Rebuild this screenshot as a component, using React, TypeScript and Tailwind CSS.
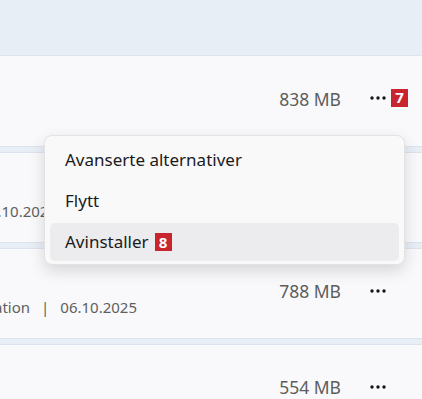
import React from 'react';

interface AppRow {
  id: string;
  publisher: string;
  date: string;
  size: string;
  anchor: number;
  badge?: string;
}

const rows: AppRow[] = [
  { id: 'a', publisher: '', date: '', size: '838 MB', anchor: 0, badge: '7' },
  { id: 'b', publisher: 'Microsoft Corporation', date: '12.10.2025', size: '812 MB', anchor: 57 },
  { id: 'c', publisher: 'Microsoft Corporation', date: '06.10.2025', size: '788 MB', anchor: 137 },
  { id: 'd', publisher: 'Microsoft Corporation', date: '01.10.2025', size: '554 MB', anchor: 36 },
];

const anchorClass: Record<number, string> = {
  0: 'w-0',
  57: 'w-[57px]',
  137: 'w-[137px]',
  36: 'w-[36px]',
};

function Dots() {
  return (
    <svg width="16" height="4" viewBox="0 0 16 4" className="block">
      <circle cx="2" cy="2" r="1.7" fill="#151515" />
      <circle cx="8" cy="2" r="1.7" fill="#151515" />
      <circle cx="14" cy="2" r="1.7" fill="#151515" />
    </svg>
  );
}

function Badge({ n }: { n: string }) {
  return (
    <span className="inline-flex items-center justify-center w-[17px] h-[18px] bg-[#c9252f] text-white text-[15px] font-bold leading-none">
      {n}
    </span>
  );
}

export default function App() {
  return (
    <div
      className="relative w-[422px] h-[399px] overflow-hidden bg-[#e8eef6]"
      style={{ fontFamily: '"Noto Sans", "Open Sans", sans-serif' }}
    >
      <div className="h-[56px] border-b border-[#dfe3ea]" />

      <div className="flex flex-col gap-[5px]">
        {rows.map((row) => (
          <div
            key={row.id}
            className="flex items-center h-[91px] bg-[#f9f9fb] border-y border-[#dde3ec] first:border-t-0"
          >
            <div className={`${anchorClass[row.anchor]} shrink-0 flex justify-end`}>
              <div className="flex flex-col whitespace-nowrap text-[15px] text-[#5f5f5f] leading-[20px]">
                <span className="invisible">App</span>
                {row.date && (
                  <span className="mt-[7px] flex">
                    <span>{row.publisher}</span>
                    <span className="px-[11px]">|</span>
                    <span>{row.date}</span>
                  </span>
                )}
              </div>
            </div>
            <div className="flex-1" />
            <span className="text-[17.5px] text-[#5d5d5d] -mt-[4px]">{row.size}</span>
            <div className="relative ml-[29px] mr-[36px] -mt-[6px]">
              <Dots />
              {row.badge && (
                <div className="absolute left-[21px] -top-[11px]">
                  <Badge n={row.badge} />
                </div>
              )}
            </div>
          </div>
        ))}
      </div>

      <div className="absolute left-[44px] top-[135px] w-[361px] rounded-[8px] bg-[#f9f9f9] border border-[#e3e3e3] shadow-[0_6px_16px_rgba(0,0,0,0.14)] px-[5px] pt-[5px] pb-[3px] flex flex-col gap-[3px]">
        <div className="h-[38px] flex items-center px-[15px] text-[17px] text-[#1b1b1b]">
          Avanserte alternativer
        </div>
        <div className="h-[38px] flex items-center px-[15px] text-[17px] text-[#1b1b1b]">
          Flytt
        </div>
        <div className="h-[38px] flex items-center px-[15px] text-[17px] text-[#1b1b1b] bg-[#ececef] rounded-[5px] gap-[6px]">
          Avinstaller
          <Badge n="8" />
        </div>
      </div>
    </div>
  );
}
